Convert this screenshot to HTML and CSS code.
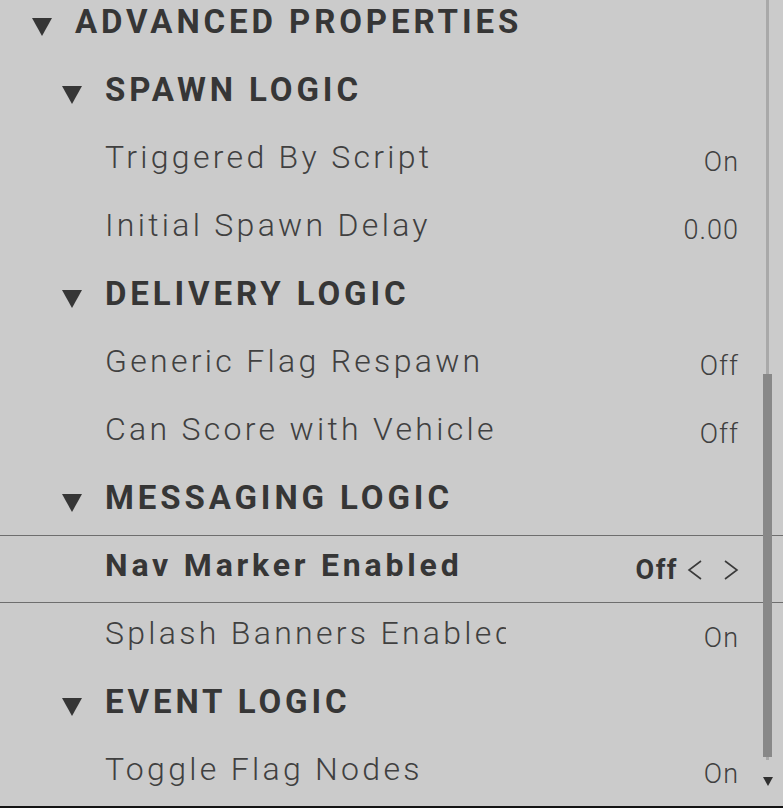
FILE: index.html
```html
<!DOCTYPE html>
<html>
<head>
<meta charset="utf-8">
<link rel="stylesheet" href="styles.css">
</head>
<body>
<div class="panel">
  <div class="list">
    <div class="row head lvl0"><span class="tri"><svg viewBox="0 0 20 18" width="20" height="18"><path d="M0 0 H20 L10 18 Z" fill="#363636"/></svg></span><span class="label">ADVANCED PROPERTIES</span></div>
    <div class="row head lvl1"><span class="tri"><svg viewBox="0 0 20 18" width="20" height="18"><path d="M0 0 H20 L10 18 Z" fill="#363636"/></svg></span><span class="label">SPAWN LOGIC</span></div>
    <div class="row item"><span class="label">Triggered By Script</span><span class="value">On</span></div>
    <div class="row item"><span class="label">Initial Spawn Delay</span><span class="value">0.00</span></div>
    <div class="row head lvl1"><span class="tri"><svg viewBox="0 0 20 18" width="20" height="18"><path d="M0 0 H20 L10 18 Z" fill="#363636"/></svg></span><span class="label">DELIVERY LOGIC</span></div>
    <div class="row item"><span class="label">Generic Flag Respawn</span><span class="value">Off</span></div>
    <div class="row item"><span class="label">Can Score with Vehicle</span><span class="value">Off</span></div>
    <div class="row head lvl1"><span class="tri"><svg viewBox="0 0 20 18" width="20" height="18"><path d="M0 0 H20 L10 18 Z" fill="#363636"/></svg></span><span class="label">MESSAGING LOGIC</span></div>
    <div class="row item selected"><span class="label">Nav Marker Enabled</span><span class="value sel"><span class="selval">Off</span><svg class="arrow" viewBox="0 0 16 22" width="16" height="22"><path d="M14 2 L2 11 L14 20" fill="none" stroke="#3a3a3a" stroke-width="1.6"/></svg><svg class="arrow" viewBox="0 0 16 22" width="16" height="22"><path d="M2 2 L14 11 L2 20" fill="none" stroke="#3a3a3a" stroke-width="1.6"/></svg></span></div>
    <div class="row item"><span class="label clip">Splash Banners Enabled</span><span class="value">On</span></div>
    <div class="row head lvl1"><span class="tri"><svg viewBox="0 0 20 18" width="20" height="18"><path d="M0 0 H20 L10 18 Z" fill="#363636"/></svg></span><span class="label">EVENT LOGIC</span></div>
    <div class="row item"><span class="label">Toggle Flag Nodes</span><span class="value">On</span></div>
  </div>
  <div class="scroll">
    <div class="track"></div>
    <div class="thumb"></div>
    <svg class="down" viewBox="0 0 10 9" width="10" height="9"><path d="M0 0 H10 L5 9 Z" fill="#303030"/></svg>
  </div>
  <div class="bottom"></div>
</div>
</body>
</html>
```
FILE: styles.css
```css
html, body {
  margin: 0;
  padding: 0;
  background: #cbcbcb;
}
.panel {
  position: relative;
  width: 783px;
  height: 808px;
  overflow: hidden;
  background: #cbcbcb;
  font-family: Roboto, "Liberation Sans", sans-serif;
}
.list {
  margin-top: -9px;
}
.row {
  box-sizing: border-box;
  height: 68px;
  display: flex;
  align-items: center;
  padding-bottom: 8px;
  border-top: 1px solid transparent;
  border-bottom: 1px solid transparent;
  white-space: nowrap;
}
.head .label {
  font-size: 33px;
  font-weight: 700;
  letter-spacing: 3.9px;
  color: #363636;
}
.lvl0 { padding-left: 32px; }
.lvl1 { padding-left: 62px; }
.tri {
  display: flex;
  width: 43px;
  margin-top: 12px;
}
.item {
  padding-left: 105px;
  padding-right: 44px;
}
.item .label {
  font-size: 32px;
  font-weight: 300;
  letter-spacing: 3.3px;
  color: #404040;
}
.item .label.clip {
  width: 401px;
  overflow: hidden;
}
.value {
  margin-left: auto;
  margin-top: 10px;
  font-size: 27px;
  font-weight: 300;
  letter-spacing: 1px;
  color: #404040;
}
.selected {
  border-top-color: #6e6e6e;
  border-bottom-color: #6e6e6e;
}
.selected .label {
  font-weight: 700;
  letter-spacing: 3.8px;
  color: #363636;
}
.value.sel {
  display: flex;
  align-items: center;
  gap: 20px;
}
.selval {
  font-weight: 700;
  letter-spacing: 1.5px;
  color: #363636;
  margin-right: -11px;
}
.arrow { display: block; }
.scroll {
  position: absolute;
  left: 763px;
  top: 0;
  width: 10px;
  height: 806px;
}
.track {
  position: absolute;
  left: 3px;
  top: 0;
  width: 3px;
  height: 760px;
  background: #a9a9a9;
}
.thumb {
  position: absolute;
  left: 0;
  top: 374px;
  width: 9px;
  height: 383px;
  background: #888888;
}
.down {
  position: absolute;
  left: 0;
  top: 777px;
}
.bottom {
  position: absolute;
  left: 0;
  bottom: 0;
  width: 783px;
  height: 2px;
  background: #141414;
}
```
